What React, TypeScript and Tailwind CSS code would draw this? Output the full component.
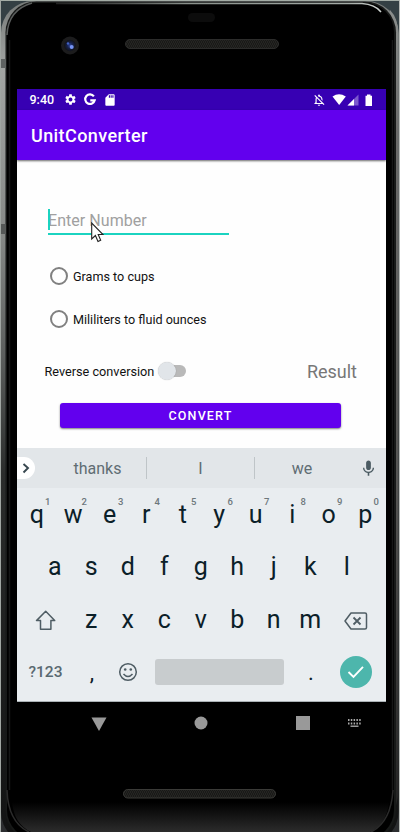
import React from "react";
import { MdSettings, MdSdCard, MdMic, MdOutlineNotificationsOff } from "react-icons/md";

const row1 = ["q", "w", "e", "r", "t", "y", "u", "i", "o", "p"];
const row2 = ["a", "s", "d", "f", "g", "h", "j", "k", "l"];
const row3 = ["z", "x", "c", "v", "b", "n", "m"];

function Frame() {
  return (
    <svg className="absolute inset-0" width="400" height="832" viewBox="0 0 400 832" aria-hidden="true">
      <defs>
        <linearGradient id="rim" x1="0" y1="0" x2="0" y2="1">
          <stop offset="0" stopColor="#777b79" />
          <stop offset="0.08" stopColor="#a2a5a3" />
          <stop offset="0.28" stopColor="#858886" />
          <stop offset="0.42" stopColor="#5c5f5e" />
          <stop offset="0.56" stopColor="#2b2d2c" />
          <stop offset="1" stopColor="#111212" />
        </linearGradient>
        <linearGradient id="rimRight" x1="0" y1="0" x2="0" y2="1">
          <stop offset="0" stopColor="#8b8f8d" />
          <stop offset="0.15" stopColor="#6c6c6b" />
          <stop offset="0.6" stopColor="#555553" />
          <stop offset="1" stopColor="#222" />
        </linearGradient>
        <linearGradient id="chin" x1="0" y1="0" x2="0" y2="1">
          <stop offset="0" stopColor="#000" />
          <stop offset="0.35" stopColor="#0f0f0f" />
          <stop offset="1" stopColor="#2c2c2c" />
        </linearGradient>
        <linearGradient id="top" x1="0" y1="0" x2="1" y2="0">
          <stop offset="0" stopColor="#555" stopOpacity="0.4" />
          <stop offset="0.4" stopColor="#8a918c" />
          <stop offset="0.9" stopColor="#a5aca8" />
          <stop offset="1" stopColor="#d0d5d2" />
        </linearGradient>
        <pattern id="mesh" width="4" height="4" patternUnits="userSpaceOnUse">
          <rect width="4" height="4" fill="#191918" />
          <path d="M0 0l2 2l-2 2M2 0l2 2l-2 2" stroke="#292927" strokeWidth="0.7" fill="none" />
        </pattern>
        <radialGradient id="lens">
          <stop offset="0" stopColor="#3047a0" />
          <stop offset="0.5" stopColor="#172148" />
          <stop offset="1" stopColor="#111217" />
        </radialGradient>
      </defs>
      <rect width="400" height="832" fill="#344044" />
      <rect y="760" width="400" height="72" fill="#2c2e30" />
      <rect x="1" y="1" width="397.5" height="843" rx="32" fill="url(#rim)" />
      <path d="M390 10Q398 18 398.500 34V790Q398 806 390 818Z" fill="url(#rimRight)" />
      <rect x="5.500" y="1.500" width="390.500" height="840" rx="31" fill="#171918" />
      <rect x="7" y="3" width="387" height="836" rx="29" fill="#000" />
      <path d="M9.500 40V790M392.500 40V790" stroke="#161717" strokeWidth="1.500" />
      <path d="M12 802H389Q387 824 370 832H31Q14 824 12 802Z" fill="url(#chin)" />
      <path d="M7 790Q8 822 29 832M393 790Q391 822 371 832" fill="none" stroke="#2b2b2b" strokeWidth="1.500" />
      <path d="M56 3.600H362Q375 4.500 381 12" fill="none" stroke="url(#top)" strokeWidth="1.500" />
      <path d="M7 35Q8 10 32 3" fill="none" stroke="#5a5d5c" strokeWidth="1.500" />
      <rect width="400" height="1" fill="#a4ada6" />
      <rect width="1" height="832" fill="#a0a6a2" />
      <rect x="399" width="1" height="832" fill="#b4b8b5" />
      <rect x="1" y="59" width="5" height="9" fill="#5e6261" />
      <rect x="1" y="224" width="5" height="10" fill="#555857" />
      <rect x="188" y="13" width="27" height="9" rx="4.500" fill="#0c0c0c" />
      <circle cx="70" cy="45.500" r="9" fill="#1c1c1d" />
      <circle cx="70" cy="45.500" r="5.800" fill="url(#lens)" />
      <circle cx="68" cy="43.500" r="1.200" fill="#4262c4" />
      <circle cx="71.700" cy="47" r="2" fill="#7795f6" />
      <rect x="125.500" y="39.500" width="153" height="9" rx="4.500" fill="url(#mesh)" stroke="#2c2c2b" />
      <rect x="123.500" y="789.500" width="152" height="8.500" rx="4.250" fill="url(#mesh)" stroke="#3a3a37" />
    </svg>
  );
}

function Status() {
  return (
    <div className="flex h-[21px] items-center bg-[#3700b3] pl-[12.5px] pr-[11px] text-white">
      <span className="w-[34.5px] pt-[1px] text-[12.5px] font-medium leading-none">9:40</span>
      <MdSettings size={13} className="shrink-0" />
      <svg className="ml-[6px] shrink-0" width="14" height="14" viewBox="0 0 14 14" fill="none" stroke="#fff" strokeWidth="2.200">
        <path d="M10.900 3.300A4.800 4.800 0 1 0 11.700 7.300H7.300" />
      </svg>
      <MdSdCard size={14} className="ml-[6px] shrink-0" />
      <div className="grow" />
      <MdOutlineNotificationsOff size={14} className="shrink-0" />
      <svg className="ml-[6px] shrink-0" width="43" height="14" viewBox="0 0 43 14" fill="#fff">
        <path d="M0.500 3.600Q7 -1 13.800 3.600L7.200 12Z" />
        <path d="M26.500 1.500V12.500H15.500Z" opacity="0.350" />
        <path d="M22 6V12.500H15.500Z" />
        <path d="M35 1.500H38.500V2.800H40V13H33.500V2.800H35Z" />
      </svg>
    </div>
  );
}

function Radio({ label }: { label: string }) {
  return (
    <div className="flex h-[43px] items-center">
      <div className="h-[18px] w-[18px] rounded-full border-2 border-[#808080]" />
      <span className="ml-[5.5px] pt-[3px] text-[12.6px] text-[#111]">{label}</span>
    </div>
  );
}

function Key({ c, n }: { c: string; n?: string }) {
  return (
    <div className="relative flex h-full w-[36.5px] items-center justify-center pb-[1px] text-[25px] leading-none text-[#0b2028]">
      {c}
      {n && <span className="absolute right-[4.5px] top-[8px] text-[9.5px] font-medium leading-none text-[#6d777b]">{n}</span>}
    </div>
  );
}

function Keyboard() {
  return (
    <div className="h-[254px] border-b border-[#aab1b5] bg-[#e9edf0]">
      <div className="flex h-10 items-center bg-[#e2e6e9] text-[16px] text-[#606d73]">
        <div className="flex h-[22px] w-[18px] items-center justify-center rounded-r-full bg-white">
          <svg width="8" height="12" viewBox="0 0 8 12" fill="none" stroke="#37474f" strokeWidth="1.900"><path d="M1.500 2L6 6L1.500 10.500" /></svg>
        </div>
        <div className="flex w-[111px] justify-center pl-[14px] pt-[2px]">thanks</div>
        <div className="h-[22px] w-px bg-[#bfc5c8]" />
        <div className="w-[107px] pt-[2px] text-center">I</div>
        <div className="h-[22px] w-px bg-[#bfc5c8]" />
        <div className="w-[94px] pt-[2px] text-center">we</div>
        <MdMic size={19} className="ml-[9.5px] text-[#4b5b62]" />
      </div>
      <div className="flex h-[52px] pl-[1.5px] pt-px">{row1.map((c, i) => <Key key={c} c={c} n={String((i + 1) % 10)} />)}</div>
      <div className="flex h-[53px] pl-[19.5px]">{row2.map((c) => <Key key={c} c={c} />)}</div>
      <div className="flex h-[53px] items-center pl-[18px]">
        <svg className="mt-[2px]" width="22" height="22" viewBox="0 0 22 22" fill="none" stroke="#4f5d64" strokeWidth="1.500" strokeLinejoin="round"><path d="M10.700 1.300L19.700 10.600H15.900V19.300H5.500V10.600H1.500Z" /></svg>
        <div className="ml-4 flex h-full">{row3.map((c) => <Key key={c} c={c} />)}</div>
        <svg className="ml-[15.5px] mt-[2px]" width="24" height="20" viewBox="0 0 24 20" fill="none" stroke="#4f5d64" strokeWidth="1.500" strokeLinejoin="round"><path d="M7 2H21Q22.500 2 22.500 3.500V16.500Q22.500 18 21 18H7L1 10Z" /><path d="M9.500 6.500L16.500 13.500M16.500 6.500L9.500 13.500" strokeWidth="1.800" /></svg>
      </div>
      <div className="mt-px flex h-[49px] items-center">
        <div className="w-[57px] pt-[2px] text-center text-[15.5px] font-medium text-[#596970]">?123</div>
        <div className="w-[36px] pt-[1px] text-center text-[22px] text-[#0b2028]">,</div>
        <svg className="ml-2" width="20" height="20" viewBox="0 0 20 20" fill="none" stroke="#4f5d64" strokeWidth="1.500">
          <circle cx="10" cy="10" r="8.300" /><path d="M5.500 12Q10 17 14.500 12" />
          <circle cx="7.200" cy="7.500" r="1.300" fill="#4f5d64" stroke="none" /><circle cx="12.800" cy="7.500" r="1.300" fill="#4f5d64" stroke="none" />
        </svg>
        <div className="ml-[17px] h-[26px] w-[129px] rounded-[3px] bg-[#c8ccce]" />
        <div className="w-[54px] pt-[1px] text-center text-[22px] text-[#0b2028]">.</div>
        <div className="ml-[2px] flex h-8 w-8 items-center justify-center rounded-full bg-[#4db6ac]">
          <svg width="18" height="14" viewBox="0 0 18 14" fill="none" stroke="#fff" strokeWidth="1.900"><path d="M1.500 7L6.500 12L16 1.800" /></svg>
        </div>
      </div>
    </div>
  );
}

export default function App() {
  return (
    <div className="relative h-[832px] w-[400px] overflow-hidden font-['Roboto',sans-serif]">
      <Frame />
      <div className="relative ml-[17px] w-[369px] pt-[89px]">
        <Status />
        <div className="relative flex h-[50px] items-center bg-[#6200ee] pl-[14px] pt-[1px] text-[18px] font-medium tracking-[0.4px] text-white shadow-[0_1px_2px_rgba(0,0,0,0.6)]">UnitConverter</div>
        <div className="h-[288px] bg-[#fefefe] pt-12">
          <div className="relative ml-[31px] flex h-[27px] w-[181px] items-center border-b-2 border-[#1bd3c0] pt-[1px] text-[16px] tracking-[0.05px] text-[#a0a0a0]">
            <span className="absolute left-0 top-[1px] h-[21px] w-[1.5px] bg-[#1bd3c0]" />
            Enter Number
            <svg className="absolute left-[43px] top-[14px]" width="13" height="21" viewBox="0 0 13 21" fill="#fff" stroke="#222" strokeWidth="1.100"><path d="M.7 1V17L4.400 13.500L7 19.500L9.700 18.300L7.200 12.500H12Z" /></svg>
          </div>
          <div className="ml-[32.5px] mt-[19px]"><Radio label="Grams to cups" /><Radio label="Mililiters to fluid ounces" /></div>
          <div className="mt-[19px] flex h-[24px] items-center pl-[27.5px] pr-[29px]">
            <span className="w-[112.5px] whitespace-nowrap pt-[2px] text-[12.7px] text-[#111]">Reverse conversion</span>
            <div className="relative ml-[3px] h-3 w-[26px] rounded-full bg-[#b9b9b9]">
              <span className="absolute -left-[2.5px] -top-[3px] h-[18px] w-[18px] rounded-full bg-[#e1e5e9] shadow-[0_0_1px_rgba(0,0,0,0.3)]" />
            </div>
            <span className="ml-auto text-[18px] text-[#777]">Result</span>
          </div>
          <div className="ml-[43px] mt-[19.5px] flex h-[25.5px] w-[281px] items-center justify-center rounded-[3px] bg-[#6200ee] pt-[3px] text-[12.5px] font-medium tracking-[1.15px] text-white shadow-[0_1px_2px_rgba(0,0,0,0.5)]">CONVERT</div>
        </div>
        <Keyboard />
        <svg className="block" width="369" height="43" viewBox="0 0 369 43" fill="#999">
          <path d="M74.500 15.500H89.500L82 29Z" />
          <circle cx="184" cy="21" r="6.500" />
          <rect x="279" y="14" width="14" height="14" />
          <path d="M331 18H344M331 21.500H344" stroke="#aaa" strokeWidth="2" strokeDasharray="1.500 1.300" />
          <rect x="333.500" y="23.500" width="8" height="1.500" />
        </svg>
      </div>
    </div>
  );
}
